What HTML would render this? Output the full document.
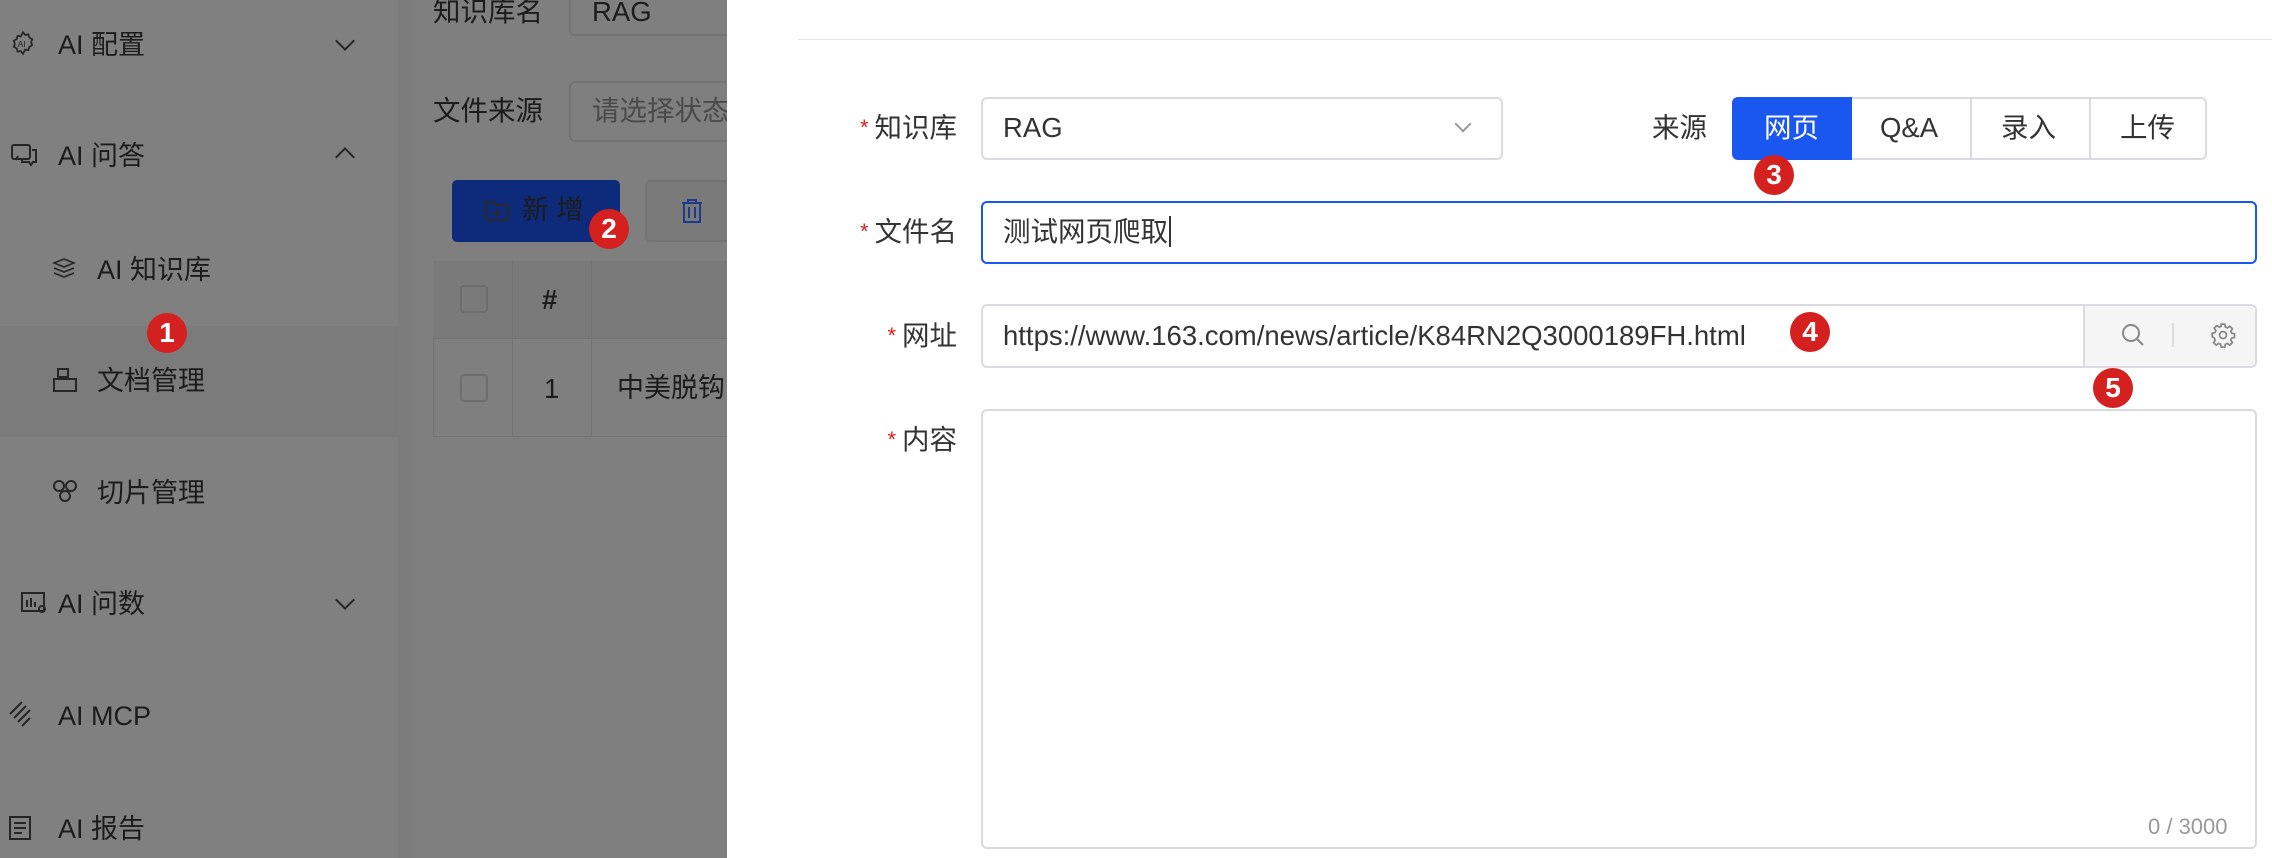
<!DOCTYPE html>
<html><head><meta charset="utf-8"><style>
*{box-sizing:border-box;margin:0;padding:0}
body{width:2272px;height:858px;overflow:hidden;position:relative;background:#808080;font-family:"Liberation Sans","Noto Sans CJK SC",sans-serif;color:#1c1c1c}
.a{position:absolute}
.side{left:0;top:0;width:398px;height:858px;background:#808080}
.si{position:absolute;font-size:27px;line-height:30px;white-space:nowrap}
.ic{position:absolute}
.chev{position:absolute;left:338px;width:14px;height:14px;border-right:2px solid #262626;border-bottom:2px solid #262626}
.badge{position:absolute;width:40px;height:40px;border-radius:50%;background:#d4201f;color:#fff;font-size:28px;font-weight:bold;text-align:center;line-height:40px}
.drawer{left:727px;top:0;width:1545px;height:858px;background:#fff}
.lbl{position:absolute;font-size:27.5px;color:#333;text-align:right;width:200px;line-height:30px}
.lbl b{color:#e02020;font-weight:normal;font-size:22px;margin-right:6px;vertical-align:top}
.box{position:absolute;border:2px solid #d9dbe0;border-radius:6px;background:#fff}
.t{font-size:27.5px;color:#333;position:absolute;line-height:30px;white-space:nowrap}
</style></head><body>
<div class="a side">
  <svg class="ic" style="left:10px;top:30px" width="26" height="26" viewBox="0 0 24 24" fill="none" stroke="#262626" stroke-width="1.6"><path d="M12 2l2 2.5 3-.5.8 3 2.7 1.5-1 2.8 1 2.8-2.7 1.5-.8 3-3-.5L12 22l-2-2.5-3 .5-.8-3L3.5 15.5l1-2.8-1-2.8L6.2 8.4 7 5.4l3 .5z"/><text x="7" y="15.5" font-size="8" fill="#262626" stroke="none" font-family="Liberation Sans">AI</text></svg>
  <div class="si" style="left:58px;top:30px">AI 配置</div><div class="chev" style="top:34px;transform:rotate(45deg)"></div>
  <svg class="ic" style="left:10px;top:142px" width="28" height="26" viewBox="0 0 28 26" fill="none" stroke="#262626" stroke-width="2"><rect x="2" y="3" width="18" height="14" rx="2"/><path d="M22 8h4v12h-3l-2 3-2-3h-7v-3"/><path d="M8 14l-2 4"/></svg>
  <div class="si" style="left:58px;top:141px">AI 问答</div><div class="chev" style="top:150px;transform:rotate(-135deg)"></div>
  <svg class="ic" style="left:52px;top:256px" width="24" height="24" viewBox="0 0 24 24" fill="none" stroke="#262626" stroke-width="1.6"><path d="M2 7l10-4 10 4-10 4z"/><path d="M2 12l10 4 10-4"/><path d="M2 17l10 4 10-4"/></svg>
  <div class="si" style="left:97px;top:255px">AI 知识库</div>
  <div class="a" style="left:0;top:326px;width:398px;height:111px;background:#7b7b7b"></div>
  <svg class="ic" style="left:52px;top:367px" width="26" height="26" viewBox="0 0 26 26" fill="none" stroke="#262626" stroke-width="2"><path d="M6 2h10v8H6zM2 12h22v12H2z"/><path d="M6 10v2"/></svg>
  <div class="si" style="left:97px;top:366px">文档管理</div>
  <svg class="ic" style="left:52px;top:479px" width="26" height="26" viewBox="0 0 26 26" fill="none" stroke="#262626" stroke-width="2"><circle cx="7" cy="7" r="5"/><circle cx="19" cy="7" r="5"/><circle cx="13" cy="17" r="5"/></svg>
  <div class="si" style="left:97px;top:478px">切片管理</div>
  <svg class="ic" style="left:20px;top:591px" width="28" height="24" viewBox="0 0 28 24" fill="none" stroke="#262626" stroke-width="2"><rect x="2" y="2" width="22" height="18"/><path d="M7 16V9M11 16V7M15 16v-5"/><circle cx="22" cy="18" r="3"/></svg>
  <div class="si" style="left:58px;top:589px">AI 问数</div><div class="chev" style="top:593px;transform:rotate(45deg)"></div>
  <svg class="ic" style="left:8px;top:700px" width="28" height="30" viewBox="0 0 28 30" fill="none" stroke="#262626" stroke-width="2"><path d="M2 14L14 2M6 18L18 6M10 22L22 10M14 26l8-8"/></svg>
  <div class="si" style="left:58px;top:701px">AI MCP</div>
  <svg class="ic" style="left:8px;top:815px" width="24" height="26" viewBox="0 0 24 26" fill="none" stroke="#262626" stroke-width="2"><rect x="2" y="2" width="20" height="22"/><path d="M6 8h12M6 13h12M6 18h8"/></svg>
  <div class="si" style="left:58px;top:814px">AI 报告</div>
</div>
<div class="a" style="left:398px;top:0;width:14px;height:858px;background:#7c7c7c"></div>
<div class="a" style="left:412px;top:0;width:315px;height:858px;background:#7f7f7f">
  <div class="t" style="left:21px;top:-3px;color:#1c1c1c">知识库名</div>
  <div class="a" style="left:157px;top:-10px;width:200px;height:46px;border:2px solid #737373;border-radius:6px"></div>
  <div class="t" style="left:180px;top:-3px;color:#1c1c1c">RAG</div>
  <div class="t" style="left:21px;top:96px;color:#1c1c1c">文件来源</div>
  <div class="a" style="left:157px;top:81px;width:200px;height:61px;border:2px solid #737373;border-radius:6px"></div>
  <div class="t" style="left:180px;top:96px;color:#4a4a4a">请选择状态</div>
  <div class="a" style="left:40px;top:180px;width:168px;height:62px;background:#0e2a7a;border-radius:5px"></div>
  <svg class="a" style="left:72px;top:200px" width="26" height="22" viewBox="0 0 26 22" fill="none" stroke="#2a2a2a" stroke-width="2"><path d="M2 2h8l2 3h12v15H2z"/><path d="M13 9v8M9 13h8"/></svg>
  <div class="t" style="left:110px;top:195px;color:#1c1c1c;font-size:27px">新 增</div>
  <div class="a" style="left:233px;top:180px;width:100px;height:62px;border:2px solid #737373;border-radius:5px;background:#7a7a7a"></div>
  <svg class="a" style="left:268px;top:198px" width="24" height="26" viewBox="0 0 24 26" fill="none" stroke="#1e3a8a" stroke-width="2"><path d="M2 5h20M8 5V2h8v3M4 5v19h16V5M9 9v11M15 9v11"/></svg>
  <div class="a" style="left:21px;top:261px;width:300px;height:176px;border:1px solid #737373"></div>
  <div class="a" style="left:21px;top:261px;width:300px;height:77px;background:#7a7a7a"></div>
  <div class="a" style="left:100px;top:261px;width:1px;height:176px;background:#737373"></div>
  <div class="a" style="left:179px;top:261px;width:1px;height:176px;background:#737373"></div>
  <div class="a" style="left:21px;top:338px;width:300px;height:1px;background:#737373"></div>
  <div class="a" style="left:48px;top:285px;width:28px;height:28px;border:2px solid #6d6d6d;border-radius:4px"></div>
  <div class="a" style="left:48px;top:374px;width:28px;height:28px;border:2px solid #6d6d6d;border-radius:4px"></div>
  <div class="t" style="left:130px;top:285px;font-weight:bold;color:#1c1c1c">#</div>
  <div class="t" style="left:132px;top:374px;color:#1c1c1c">1</div>
  <div class="t" style="left:205px;top:373px;color:#1c1c1c;font-size:27px">中美脱钩</div>
</div>
<div class="a drawer">
  <div class="a" style="left:71px;top:39px;width:1484px;height:1px;background:#e6e6e6"></div>
  <div class="lbl" style="left:30px;top:113px"><b>*</b>知识库</div>
  <div class="box" style="left:254px;top:97px;width:522px;height:63px"></div>
  <div class="t" style="left:276px;top:113px">RAG</div>
  <div class="a" style="left:730px;top:118px;width:12px;height:12px;border-right:2px solid #999;border-bottom:2px solid #999;transform:rotate(45deg)"></div>
  <div class="t" style="left:925px;top:113px">来源</div>
  <div class="box" style="left:1005px;top:97px;width:475px;height:63px"></div>
  <div class="a" style="left:1005px;top:97px;width:120px;height:63px;background:#1a56f0;border-radius:6px 0 0 6px"></div>
  <div class="t" style="left:1037px;top:113px;color:#fff">网页</div>
  <div class="a" style="left:1243px;top:99px;width:2px;height:59px;background:#d9dbe0"></div>
  <div class="a" style="left:1362px;top:99px;width:2px;height:59px;background:#d9dbe0"></div>
  <div class="t" style="left:1153px;top:113px">Q&amp;A</div>
  <div class="t" style="left:1274px;top:113px">录入</div>
  <div class="t" style="left:1393px;top:113px">上传</div>
  <div class="lbl" style="left:30px;top:217px"><b>*</b>文件名</div>
  <div class="box" style="left:254px;top:201px;width:1276px;height:63px;border-color:#1a56f0"></div>
  <div class="t" style="left:276px;top:217px">测试网页爬取<span style="border-left:2px solid #333;margin-left:1px"></span></div>
  <div class="lbl" style="left:30px;top:321px"><b>*</b>网址</div>
  <div class="box" style="left:254px;top:304px;width:1276px;height:64px"></div>
  <div class="a" style="left:1356px;top:306px;width:172px;height:60px;background:#f5f5f5;border-left:2px solid #d9dbe0;border-radius:0 5px 5px 0"></div>
  <div class="a" style="left:1445px;top:323px;width:2px;height:24px;background:#ddd"></div>
  <svg class="a" style="left:1393px;top:322px" width="26" height="26" viewBox="0 0 26 26" fill="none" stroke="#888" stroke-width="2"><circle cx="11" cy="11" r="8"/><path d="M17 17l6 6"/></svg>
  <svg class="a" style="left:1483px;top:322px" width="26" height="26" viewBox="0 0 24 24" fill="none" stroke="#888" stroke-width="1.6"><circle cx="12" cy="12" r="3.2"/><path d="M10.3 2h3.4l.5 2.6 1.9.8 2.2-1.5 2.4 2.4-1.5 2.2.8 1.9 2.6.5v3.4l-2.6.5-.8 1.9 1.5 2.2-2.4 2.4-2.2-1.5-1.9.8-.5 2.6h-3.4l-.5-2.6-1.9-.8-2.2 1.5-2.4-2.4 1.5-2.2-.8-1.9L2 13.7v-3.4l2.6-.5.8-1.9-1.5-2.2 2.4-2.4 2.2 1.5 1.9-.8z"/></svg>
  <div class="t" style="left:276px;top:321px">https://www.163.com/news/article/K84RN2Q3000189FH.html</div>
  <div class="lbl" style="left:30px;top:425px"><b>*</b>内容</div>
  <div class="box" style="left:254px;top:409px;width:1276px;height:440px"></div>
  <div class="t" style="left:1421px;top:812px;color:#999;font-size:22px">0 / 3000</div>
</div>
<div class="badge" style="left:147px;top:313px">1</div>
<div class="badge" style="left:589px;top:209px">2</div>
<div class="badge" style="left:1754px;top:155px">3</div>
<div class="badge" style="left:1790px;top:312px">4</div>
<div class="badge" style="left:2093px;top:368px">5</div>
</body></html>
